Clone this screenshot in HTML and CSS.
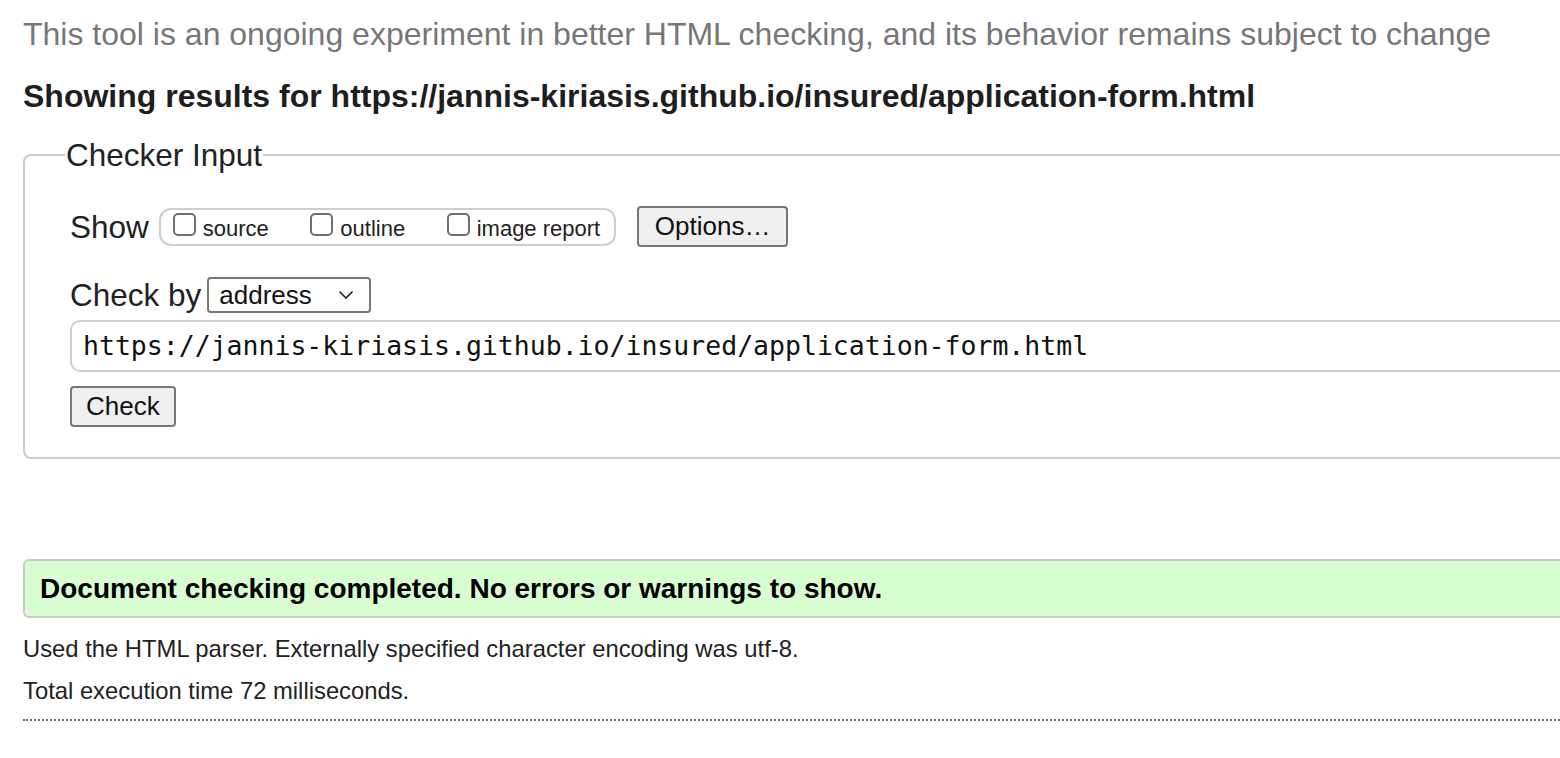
FILE: index.html
```html
<!DOCTYPE html>
<html>
<head>
<meta charset="utf-8">
<link rel="stylesheet" href="styles.css">
</head>
<body>
<div class="page">
  <p class="note">This tool is an ongoing experiment in better HTML checking, and its behavior remains subject to change</p>
  <h2 class="results">Showing results for https://jannis-kiriasis.github.io/insured/application-form.html</h2>
  <fieldset class="checker">
    <legend class="legend">Checker Input</legend>
    <div class="row show-row">
      <span class="label">Show</span>
      <div class="opts">
        <label class="opt"><span class="cb"></span><span class="opt-text">source</span></label>
        <label class="opt"><span class="cb"></span><span class="opt-text">outline</span></label>
        <label class="opt"><span class="cb"></span><span class="opt-text">image report</span></label>
      </div>
      <button class="btn options">Options…</button>
    </div>
    <div class="row by-row">
      <span class="label">Check by</span>
      <div class="select"><span>address</span>
        <svg class="chev" width="16" height="10" viewBox="0 0 16 10"><path d="M1.5 1.5 L8 8 L14.5 1.5" fill="none" stroke="#222" stroke-width="1.6"/></svg>
      </div>
    </div>
    <div class="url">https://jannis-kiriasis.github.io/insured/application-form.html</div>
    <button class="btn check">Check</button>
  </fieldset>
  <div class="success">Document checking completed. No errors or warnings to show.</div>
  <p class="info">Used the HTML parser. Externally specified character encoding was utf-8.</p>
  <p class="info">Total execution time 72 milliseconds.</p>
  <div class="rule"></div>
</div>
</body>
</html>
```
FILE: styles.css
```css
html, body {
  margin: 0;
  padding: 0;
  background: #fff;
  overflow: hidden;
}
body {
  font-family: "Liberation Sans", Arial, Helvetica, sans-serif;
  color: #222;
}
.page {
  width: 1700px;
  padding-left: 23px;
}
.note {
  margin: 0;
  padding-top: 16px;
  font-size: 32px;
  line-height: 36px;
  color: #777;
}
.results {
  margin: 26px 0 0;
  font-size: 32px;
  line-height: 36px;
  font-weight: bold;
  color: #1e1e1e;
}
.checker {
  margin: 24px 0 0;
  padding: 18px 0 30px 45px;
  border: 2px solid #cbcbcb;
  border-radius: 8px;
  min-width: 0;
}
.legend {
  font-size: 31.5px;
  line-height: 34px;
  padding: 0 1px;
  margin-left: -5px;
  color: #222;
}
.row {
  display: flex;
  align-items: center;
}
.label {
  font-size: 31.5px;
  line-height: 36px;
  color: #222;
}
.opts {
  display: flex;
  align-items: center;
  margin-left: 10px;
  height: 38px;
  padding: 0 11px 0 12px;
  border: 2px solid #cfcfcf;
  border-radius: 12px;
  box-sizing: border-box;
  width: 457px;
  gap: 41.5px;
}
.opt {
  display: flex;
  align-items: center;
  font-size: 22px;
  color: #222;
  gap: 7px;
}
.opt-text {
  padding-top: 4px;
}
.cb {
  width: 23px;
  height: 23px;
  box-sizing: border-box;
  border: 2px solid #6f6f6f;
  border-radius: 5px;
  background: #fff;
  margin-top: -4px;
}
.btn {
  font-family: "Liberation Sans", Arial, Helvetica, sans-serif;
  font-size: 26px;
  color: #111;
  background: #efefef;
  border: 2px solid #777;
  border-radius: 4px;
  padding: 0 15px;
  height: 41px;
  line-height: 37px;
}
.options {
  margin-left: 21px;
  padding: 0 16px;
}
.show-row {
  margin-top: 16px;
}
.by-row {
  margin-top: 30px;
}
.select {
  display: flex;
  align-items: center;
  justify-content: space-between;
  margin-left: 6px;
  width: 164px;
  height: 36px;
  box-sizing: border-box;
  border: 2px solid #767676;
  border-radius: 4px;
  padding: 0 15px 0 10px;
  font-size: 26px;
  color: #111;
}
.url {
  margin-top: 7px;
  height: 52px;
  box-sizing: border-box;
  border: 2px solid #cfcfcf;
  border-right: none;
  border-radius: 10px 0 0 10px;
  padding-left: 11px;
  font-family: "DejaVu Sans Mono", monospace;
  font-size: 26.5px;
  line-height: 48px;
  color: #111;
}
.check {
  display: block;
  margin-top: 14px;
  padding: 0 14px;
}
.success {
  margin-top: 100px;
  height: 59px;
  box-sizing: border-box;
  background: #d7fdd1;
  border: 2px solid #cbcbcb;
  border-radius: 6px;
  padding-left: 15px;
  font-size: 28px;
  font-weight: bold;
  line-height: 55px;
  color: #000;
}
.info {
  margin: 0;
  font-size: 23.8px;
  line-height: 28px;
  color: #222;
}
.success + .info {
  margin-top: 17px;
}
.info + .info {
  margin-top: 14px;
}
.rule {
  margin-top: 14px;
  border-top: 2px dotted #666;
}
```
